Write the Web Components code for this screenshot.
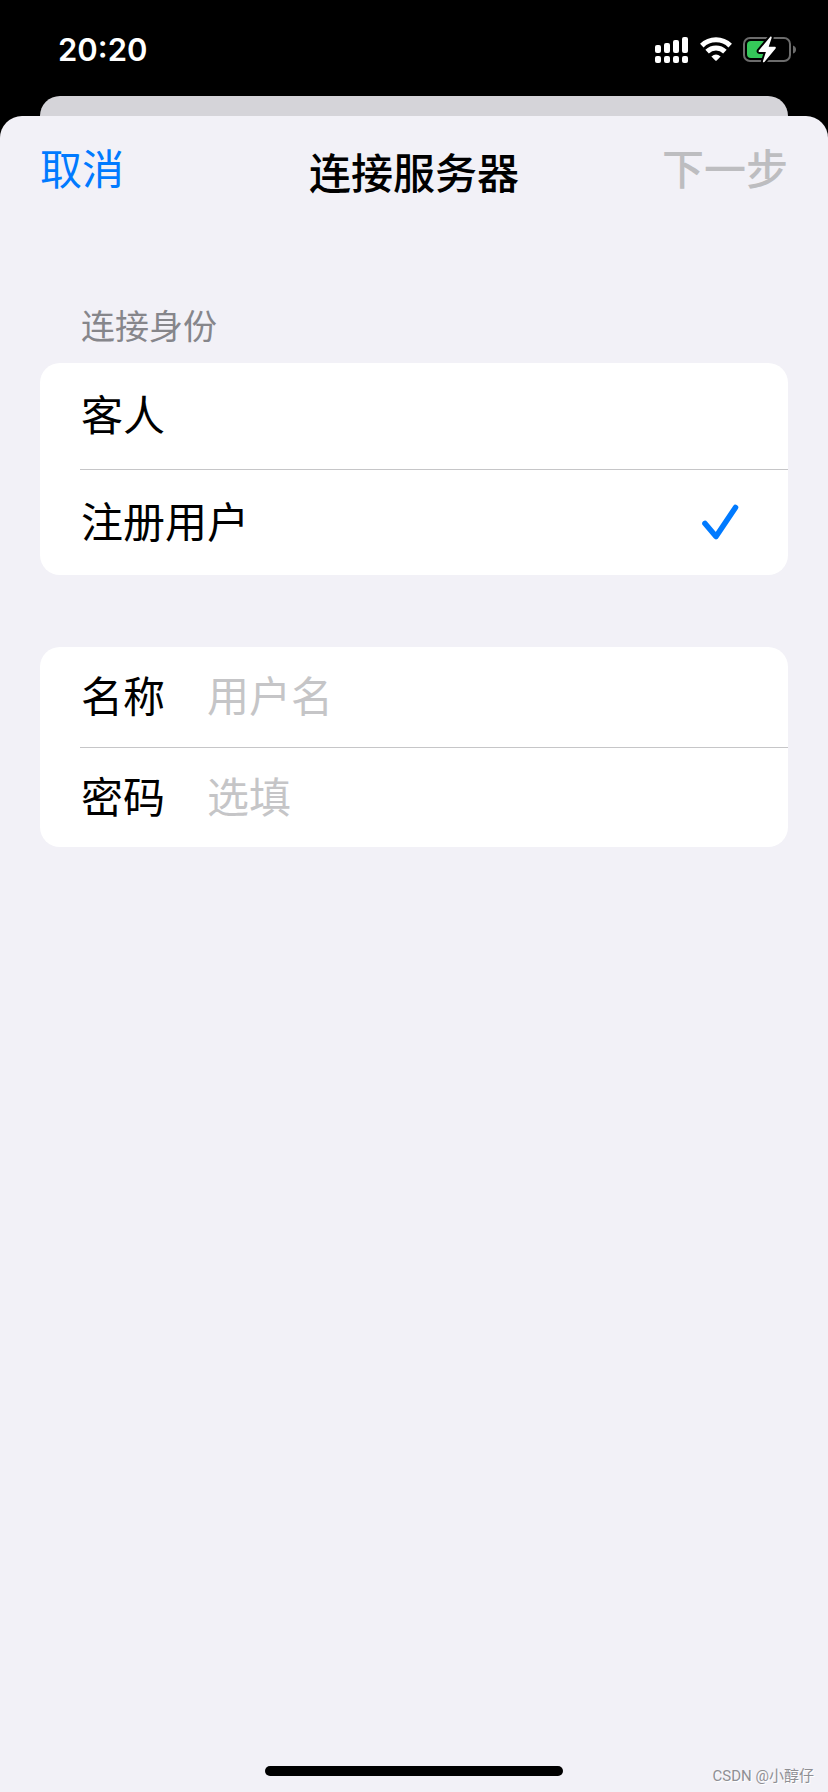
<!DOCTYPE html>
<html lang="zh-CN">
<head>
<meta charset="utf-8">
<meta name="viewport" content="width=device-width, initial-scale=1">
<title>连接服务器</title>
<style>
  body {
    margin: 0;
    background: #000;
    color: #000;
    font-family: Inter, "Noto Sans CJK SC", sans-serif;
    font-size: 42px;
    line-height: 60px;
    --blue: #007aff;
    --sheet: #f2f1f7;
    --line: #c6c6c8;
  }
</style>
</head>
<body>
<app-screen>
  <status-bar slot="status" time="20:20"></status-bar>
  <nav-bar>
    <button-link slot="left">取消</button-link>
    连接服务器
    <button-link slot="right" disabled>下一步</button-link>
  </nav-bar>
  <choice-group heading="连接身份" options="客人,注册用户" selected="注册用户"></choice-group>
  <field-group>
    <text-field label="名称" hint="用户名"></text-field>
    <text-field label="密码" hint="选填" type="password"></text-field>
  </field-group>
  <span slot="mark">CSDN @小醇仔</span>
</app-screen>

<script>
class Base extends HTMLElement {
  connectedCallback() {
    if (this.shadowRoot) return;
    this.attachShadow({ mode: 'open' }).innerHTML = this.render();
  }
}

customElements.define('app-screen', class extends Base {
  render() {
    return `<style>
      :host { display: flex; flex-direction: column; min-height: 100vh; position: relative; }
      .behind { height: 20px; margin: 0 40px; background: #d5d4d9; border-radius: 20px 20px 0 0; }
      main { flex: 1; display: flex; flex-direction: column; background: var(--sheet); border-radius: 22px 22px 0 0; }
      .home { width: 36%; height: 10px; margin: auto auto 16px; border-radius: 5px; background: #000; }
      .mark { position: absolute; right: 14px; bottom: 4px; color: #8f8f94; font: 15px/24px Roboto, "Noto Sans CJK SC", sans-serif; text-shadow: 1px 1px 0 #fff; }
    </style>
    <slot name="status"></slot>
    <div class="behind"></div>
    <main><slot></slot><div class="home"></div></main>
    <div class="mark"><slot name="mark"></slot></div>`;
  }
});

customElements.define('status-bar', class extends Base {
  render() {
    return `<style>
      :host { display: flex; align-items: center; justify-content: space-between; height: 96px; padding: 0 31px 0 58px; box-sizing: border-box; color: #fff; }
      time { font-size: 31px; line-height: 40px; font-weight: 600; padding-top: 4px; }
      .icons { display: flex; gap: 11px; padding-top: 4px; }
      svg { display: block; height: 28px; }
    </style>
    <time>${this.getAttribute('time')}</time>
    <div class="icons">
      <svg width="34" viewBox="0 0 34 28" fill="#fff" aria-label="信号">
        <rect y="9" width="6" height="8" rx="2"/><rect x="9" y="7" width="6" height="10" rx="2"/>
        <rect x="18" y="4" width="6" height="13" rx="2"/><rect x="27" y="1" width="6" height="16" rx="2"/>
        <rect y="20" width="6" height="7" rx="2"/><rect x="9" y="20" width="6" height="7" rx="2"/>
        <rect x="18" y="20" width="6" height="7" rx="2"/><rect x="27" y="20" width="6" height="7" rx="2"/>
      </svg>
      <svg width="32" viewBox="0 0 32 28" aria-label="无线网络">
        <g fill="none" stroke="#fff" stroke-width="5"><path d="M1.8 9.6A20.3 20.3 0 0 1 30.2 9.6"/><path d="M7.1 15.6A12.7 12.7 0 0 1 24.9 15.6"/></g>
        <path fill="#fff" d="M11.4 20.4Q16 16.8 20.6 20.4L16.7 24.5Q16 25.2 15.3 24.5Z"/>
      </svg>
      <svg width="54" viewBox="0 0 54 28" aria-label="电池充电中">
        <rect x="1" y="2" width="46" height="23" rx="6" fill="none" stroke="#6c6c6c" stroke-width="2"/>
        <path fill="#6c6c6c" d="M50 9.5Q53 10.5 53 13.5T50 17.5Z"/>
        <rect x="4" y="5" width="19" height="17" rx="4" fill="#35c759"/>
        <path fill="#fff" stroke="#000" stroke-width="4" paint-order="stroke" stroke-linejoin="round" d="M27.5 .6Q29 .2 28.6 2L25.7 10.8H32Q33.4 11.2 32.4 12.7L21.4 26Q19.5 27 20 25L22.9 16H16.3Q15 15.5 16 14.2Z"/>
      </svg>
    </div>`;
  }
});

customElements.define('nav-bar', class extends Base {
  render() {
    return `<style>
      :host { display: grid; grid-template-columns: 1fr auto 1fr; align-items: start; padding: 24px 40px 0; height: 127px; }
      h1 { margin: 0; padding-top: 4px; font-size: 42px; line-height: 60px; font-weight: 500; }
      .right { text-align: right; }
    </style>
    <div><slot name="left"></slot></div>
    <h1><slot></slot></h1>
    <div class="right"><slot name="right"></slot></div>`;
  }
});

customElements.define('button-link', class extends Base {
  render() {
    return `<style>
      :host { display: inline-block; }
      button { display: block; border: 0; padding: 0; background: none; font: inherit; color: var(--blue); }
      button:disabled { color: #bdbdc0; font-weight: 500; }
    </style><button type="button" ${this.hasAttribute('disabled') ? 'disabled' : ''}><slot></slot></button>`;
  }
});

customElements.define('choice-group', class extends Base {
  render() {
    const rows = this.getAttribute('options').split(',').map(o => `
      <label><span>${o}</span><input type="radio" name="identity" ${o === this.getAttribute('selected') ? 'checked' : ''}>
      <svg width="38" height="38" viewBox="0 0 38 38" aria-hidden="true"><path d="M4 19.5L15 32.5L34.5 3.5" fill="none" stroke="var(--blue)" stroke-width="5.6" stroke-linecap="round" stroke-linejoin="round"/></svg></label>`).join('');
    return `<style>
      :host { display: block; margin: 36px 40px 0; }
      fieldset { margin: 0; padding: 0; border: 0; min-width: 0; }
      legend { padding: 0 41px 12px; font-size: 34px; line-height: 48px; color: #86868b; }
      .card { border-radius: 20px; background: #fff; overflow: hidden; }
      label { display: flex; align-items: center; justify-content: space-between; box-sizing: border-box; height: 106px; margin-left: 40px; padding-right: 49px; padding-left: 1px; }
      label + label { border-top: 1px solid var(--line); }
      input { appearance: none; width: 0; height: 0; margin: 0; }
      svg { visibility: hidden; }
      input:checked + svg { visibility: visible; }
    </style>
    <fieldset><legend>${this.getAttribute('heading')}</legend><div class="card">${rows}</div></fieldset>`;
  }
});

customElements.define('field-group', class extends Base {
  render() {
    return `<style>
      :host { display: block; margin: 72px 40px 0; border-radius: 20px; background: #fff; overflow: hidden; }
      ::slotted(:not(:first-child)) { border-top: 1px solid var(--line); }
    </style><slot></slot>`;
  }
});

customElements.define('text-field', class extends Base {
  render() {
    return `<style>
      :host { display: flex; align-items: center; gap: 42px; box-sizing: border-box; height: 100px; margin-left: 40px; padding-left: 1px; }
      label { flex: none; }
      input { flex: 1; min-width: 0; border: 0; padding: 0; outline: 0; background: none; font: inherit; height: 60px; color: #000; }
      input::placeholder { color: #c5c5c7; opacity: 1; }
    </style>
    <label for="field">${this.getAttribute('label')}</label>
    <input id="field" type="${this.getAttribute('type') || 'text'}" placeholder="${this.getAttribute('hint')}">`;
  }
});
</script>
</body>
</html>
